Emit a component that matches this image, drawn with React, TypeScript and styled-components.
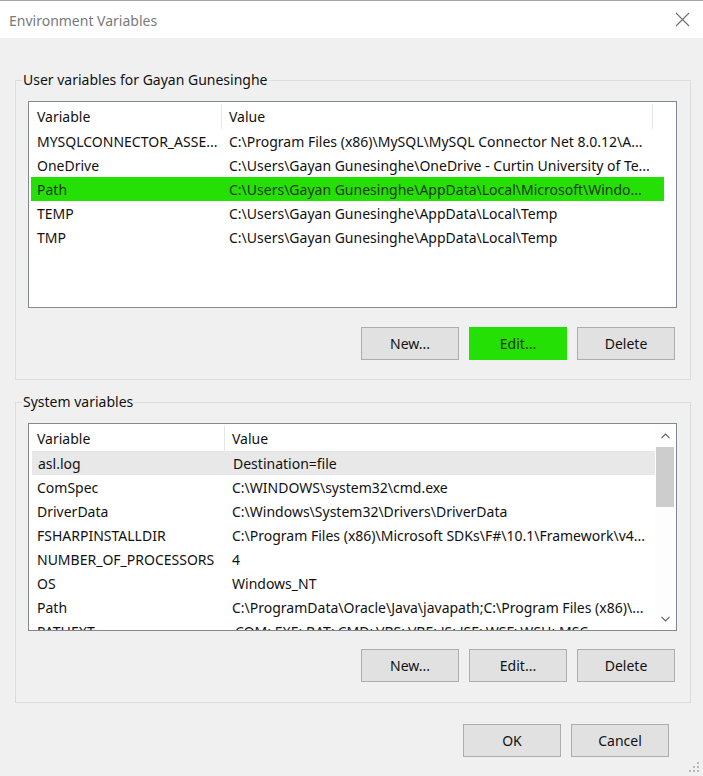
import React from 'react'
import styled, { createGlobalStyle } from 'styled-components'

type Mark = 'green' | 'gray' | undefined

type VarRow = {
  name: string
  value: string
  mark?: Mark
}

const userVars: VarRow[] = [
  {
    name: 'MYSQLCONNECTOR_ASSE...',
    value: 'C:\\Program Files (x86)\\MySQL\\MySQL Connector Net 8.0.12\\A...',
  },
  {
    name: 'OneDrive',
    value: 'C:\\Users\\Gayan Gunesinghe\\OneDrive - Curtin University of Te...',
  },
  {
    name: 'Path',
    value: 'C:\\Users\\Gayan Gunesinghe\\AppData\\Local\\Microsoft\\Windo...',
    mark: 'green',
  },
  { name: 'TEMP', value: 'C:\\Users\\Gayan Gunesinghe\\AppData\\Local\\Temp' },
  { name: 'TMP', value: 'C:\\Users\\Gayan Gunesinghe\\AppData\\Local\\Temp' },
]

const systemVars: VarRow[] = [
  { name: 'asl.log', value: 'Destination=file', mark: 'gray' },
  { name: 'ComSpec', value: 'C:\\WINDOWS\\system32\\cmd.exe' },
  { name: 'DriverData', value: 'C:\\Windows\\System32\\Drivers\\DriverData' },
  {
    name: 'FSHARPINSTALLDIR',
    value: 'C:\\Program Files (x86)\\Microsoft SDKs\\F#\\10.1\\Framework\\v4...',
  },
  { name: 'NUMBER_OF_PROCESSORS', value: '4' },
  { name: 'OS', value: 'Windows_NT' },
  {
    name: 'Path',
    value: 'C:\\ProgramData\\Oracle\\Java\\javapath;C:\\Program Files (x86)\\...',
  },
  {
    name: 'PATHEXT',
    value: '.COM;.EXE;.BAT;.CMD;.VBS;.VBE;.JS;.JSE;.WSF;.WSH;.MSC',
  },
]

const GREEN = '#25e004'

const GlobalStyle = createGlobalStyle`
  html, body {
    margin: 0;
    padding: 0;
    background: #f0f0f0;
  }

  body {
    font-family: "Noto Sans", "Open Sans", sans-serif;
    color: #111;
  }

  * {
    box-sizing: border-box;
  }
`

function CloseIcon() {
  return (
    <svg width="15" height="15" viewBox="0 0 15 15">
      <path d="M1 1 L14 14 M14 1 L1 14" stroke="#6f6f6f" strokeWidth="1.1" />
    </svg>
  )
}

function Chevron({ down }: { down?: boolean }) {
  return (
    <svg width="9" height="6" viewBox="0 0 9 6">
      <polyline
        points={down ? '0.5,0.8 4.5,4.8 8.5,0.8' : '0.5,5.2 4.5,1.2 8.5,5.2'}
        fill="none"
        stroke="#606060"
        strokeWidth="1.2"
      />
    </svg>
  )
}

function ResizeGrip() {
  const dots = [
    [8, 0],
    [8, 4],
    [4, 4],
    [8, 8],
    [4, 8],
    [0, 8],
  ]
  return (
    <Grip width="11" height="11" viewBox="0 0 11 11">
      {dots.map(([x, y]) => (
        <rect key={`${x}-${y}`} x={x} y={y} width="2" height="2" fill="#b8b8b8" />
      ))}
    </Grip>
  )
}

function VariableList({
  rows,
  height,
  nameWidth,
  scroll,
}: {
  rows: VarRow[]
  height: number
  nameWidth: number
  scroll?: boolean
}) {
  const cols = scroll ? `${nameWidth}px 1fr` : `${nameWidth}px 431px 1fr`
  return (
    <ListBox $height={height}>
      <ListArea>
        <HeaderRow $cols={cols}>
          <HeaderCell $first>Variable</HeaderCell>
          <HeaderCell>Value</HeaderCell>
          {!scroll && <HeaderCell />}
        </HeaderRow>
        {rows.map((row) => (
          <DataRow
            key={row.name + row.value}
            $cols={`${nameWidth - 2}px 1fr`}
            $mark={row.mark}
          >
            <NameCell>{row.name}</NameCell>
            <ValueCell>{row.value}</ValueCell>
          </DataRow>
        ))}
      </ListArea>
      {scroll && (
        <ScrollBar>
          <ScrollArrow>
            <Chevron />
          </ScrollArrow>
          <Track>
            <Thumb />
          </Track>
          <ScrollArrow>
            <Chevron down />
          </ScrollArrow>
        </ScrollBar>
      )}
    </ListBox>
  )
}

export default function App() {
  return (
    <>
      <GlobalStyle />
      <Window>
        <TitleBar>
          <Title>Environment Variables</Title>
          <CloseIcon />
        </TitleBar>

        <Content>
          <Group>
            <Legend>User variables for Gayan Gunesinghe</Legend>
            <VariableList rows={userVars} height={207} nameWidth={193} />
            <ButtonRow $top={19}>
              <Button>New...</Button>
              <Button $green>Edit...</Button>
              <Button>Delete</Button>
            </ButtonRow>
          </Group>

          <Group $second>
            <Legend>System variables</Legend>
            <VariableList rows={systemVars} height={208} nameWidth={196} scroll />
            <ButtonRow $top={18}>
              <Button>New...</Button>
              <Button>Edit...</Button>
              <Button>Delete</Button>
            </ButtonRow>
          </Group>

          <Footer>
            <Button>OK</Button>
            <Button>Cancel</Button>
          </Footer>
        </Content>
        <ResizeGrip />
      </Window>
    </>
  )
}

const Window = styled.div`
  position: relative;
  width: 703px;
  height: 776px;
  overflow: hidden;
  background: #f0f0f0;
  border-top: 1px solid #a3a3a3;
  display: flex;
  flex-direction: column;
`

const TitleBar = styled.div`
  height: 37px;
  flex: none;
  background: #fff;
  display: flex;
  align-items: center;
  justify-content: space-between;
  padding: 0 13px 0 9px;
`

const Title = styled.span`
  font-size: 14px;
  color: #7a7a7a;
  padding-top: 1px;
`

const Content = styled.div`
  display: flex;
  flex-direction: column;
  padding: 32px 12px 0 15px;
`

const Group = styled.fieldset<{ $second?: boolean }>`
  margin: ${({ $second }) => ($second ? '12px' : '0')} 0 0 0;
  padding: 11px 13px ${({ $second }) => ($second ? '20px' : '19px')} 12px;
  border: 1px solid #dcdcdc;
  min-width: 0;
  display: flex;
  flex-direction: column;
`

const Legend = styled.legend`
  font-size: 14px;
  line-height: 20px;
  padding: 0 1px;
  margin-left: -6px;
  color: #111;
`

const ListBox = styled.div<{ $height: number }>`
  height: ${({ $height }) => $height}px;
  background: #fff;
  border: 1px solid #828790;
  display: flex;
  overflow: hidden;
`

const ListArea = styled.div`
  flex: 1;
  min-width: 0;
  display: flex;
  flex-direction: column;
`

const HeaderRow = styled.div<{ $cols: string }>`
  height: 27px;
  flex: none;
  display: grid;
  grid-template-columns: ${({ $cols }) => $cols};
  padding-top: 2px;
`

const HeaderCell = styled.div<{ $first?: boolean }>`
  display: flex;
  align-items: center;
  padding-left: ${({ $first }) => ($first ? '8px' : '7px')};
  font-size: 14px;
  border-right: 1px solid #e5e5e5;

  &:last-child {
    border-right: none;
  }
`

const DataRow = styled.div<{ $cols: string; $mark?: Mark }>`
  height: 24px;
  flex: none;
  display: grid;
  grid-template-columns: ${({ $cols }) => $cols};
  align-items: center;
  margin-left: ${({ $mark }) => ($mark === 'gray' ? '3px' : '2px')};
  margin-right: ${({ $mark }) => ($mark === 'green' ? '12px' : '0')};
  background: ${({ $mark }) =>
    $mark === 'green' ? GREEN : $mark === 'gray' ? '#e8e8e8' : 'transparent'};
  color: ${({ $mark }) => ($mark === 'green' ? '#1d3514' : '#111')};
  font-size: 14px;
`

const NameCell = styled.div`
  padding-left: 6px;
  white-space: nowrap;
  overflow: hidden;
`

const ValueCell = styled.div`
  padding-left: 7px;
  white-space: nowrap;
  overflow: hidden;
`

const ScrollBar = styled.div`
  width: 21px;
  flex: none;
  display: flex;
  flex-direction: column;
  background: #fdfdfd;
`

const ScrollArrow = styled.div`
  height: 23px;
  flex: none;
  display: flex;
  align-items: center;
  justify-content: center;
  padding-right: 1px;
`

const Track = styled.div`
  flex: 1;
  padding: 0 2px 0 1px;
`

const Thumb = styled.div`
  height: 60px;
  background: #cdcdcd;
`

const ButtonRow = styled.div<{ $top: number }>`
  display: flex;
  justify-content: flex-end;
  gap: 10px;
  margin-top: ${({ $top }) => $top}px;
  padding-right: 2px;
`

const Button = styled.button<{ $green?: boolean }>`
  width: 98px;
  height: 33px;
  margin: 0;
  padding: 0;
  font-family: inherit;
  font-size: 14px;
  color: ${({ $green }) => ($green ? '#1d3514' : '#111')};
  background: ${({ $green }) => ($green ? GREEN : '#e1e1e1')};
  border: 1px solid ${({ $green }) => ($green ? GREEN : '#adadad')};
  border-radius: 0;
`

const Footer = styled.div`
  display: flex;
  justify-content: flex-end;
  gap: 10px;
  margin-top: 21px;
  padding-right: 22px;
`

const Grip = styled.svg`
  position: absolute;
  right: 3px;
  bottom: 3px;
`
